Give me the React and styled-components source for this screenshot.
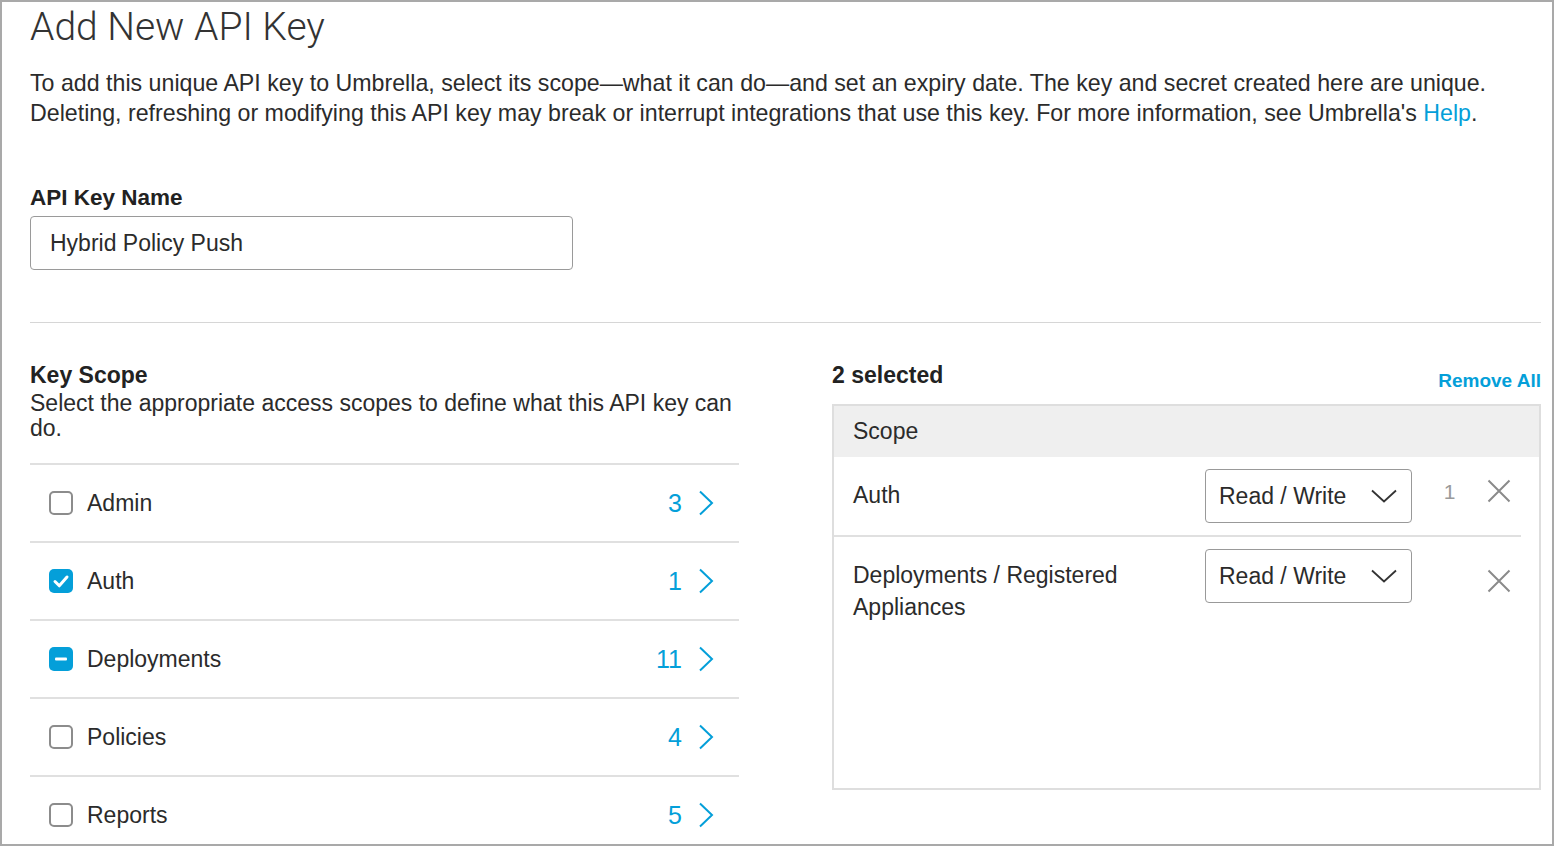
import React from "react"
import styled, { createGlobalStyle } from "styled-components"

const GlobalStyle = createGlobalStyle`
  html, body { margin: 0; padding: 0; background: #fff; }
  body { font-family: "Liberation Sans", Arial, sans-serif; color: #333; }
  * { box-sizing: border-box; }
`

const blue = "#049fd9"

const Frame = styled.div`
width: 1554px;
height: 846px;
border: 2px solid #a9a9a9;
padding: 3px 11px 0 28px;
overflow: hidden;
background: #fff;
`

const Title = styled.h1`
margin: 0;
font-family: Roboto, "Liberation Sans", sans-serif;
font-weight: 300;
font-size: 39px;
line-height: 44px;
color: #333;
`

const Intro = styled.p`
margin: 19px 0 0;
font-size: 23.2px;
line-height: 30px;
color: #2b2b2b;
white-space: nowrap;
`

const Link = styled.a`
color: ${blue};
text-decoration: none;
`

const FieldLabel = styled.div`
margin-top: 57px;
font-weight: 700;
font-size: 22.5px;
line-height: 26px;
color: #222;
`

const TextInput = styled.input`
display: block;
margin-top: 5px;
width: 543px;
height: 54px;
border: 1.5px solid #9a9a9a;
border-radius: 4px;
padding: 0 19px;
font-family: inherit;
font-size: 23px;
color: #2b2b2b;
outline: none;
`

const Divider = styled.hr`
margin: 52px 0 0;
border: none;
height: 1px;
background: #d6d6d6;
`

const Columns = styled.div`
display: grid;
grid-template-columns: 709px 709px;
column-gap: 93px;
margin-top: 39px;
`

const Column = styled.div`
display: flex;
flex-direction: column;
`

const SectionTitle = styled.div`
font-weight: 700;
font-size: 23px;
line-height: 26px;
color: #222;
`

const Desc = styled.div`
margin-top: 3px;
font-size: 23px;
line-height: 25px;
color: #2b2b2b;
`

const ScopeList = styled.div`
margin-top: 22px;
`

const ScopeRow = styled.div`
display: flex;
align-items: center;
gap: 14px;
height: 78px;
padding: 0 25px 0 19px;
border-top: 2px solid #e0e0e0;
`

const Box = styled.span`
flex: none;
width: 24px;
height: 24px;
border-radius: 5px;
border: ${({ $on }) => ($on ? "none" : "2.5px solid #8c8c8c")};
background: ${({ $on }) => ($on ? blue : "#fff")};
display: flex;
align-items: center;
justify-content: center;
`

const ScopeName = styled.span`
flex: 1;
font-size: 23px;
color: #2b2b2b;
`

const Count = styled.span`
font-size: 25px;
color: ${blue};
margin-right: 2px;
`

const SelHeader = styled.div`
display: flex;
justify-content: space-between;
align-items: flex-end;
`

const RemoveAll = styled.a`
font-weight: 700;
font-size: 19px;
line-height: 22px;
color: ${blue};
margin-bottom: -4px;
`

const Table = styled.div`
margin-top: 16px;
height: 386px;
border: 2px solid #dedede;
`

const TableHead = styled.div`
height: 51px;
background: #efefef;
padding-left: 19px;
display: flex;
align-items: center;
font-size: 23px;
color: #2b2b2b;
`

const Rows = styled.div`
margin-right: 18px;
`

const Row = styled.div`
display: grid;
grid-template-columns: 1fr 207px 75px 24px;
align-items: start;
padding: 12px 10px 12px 19px;
border-bottom: ${({ $divided }) => ($divided ? "2px solid #e0e0e0" : "none")};
`

const RowName = styled.div`
margin-top: 10px;
font-size: 23px;
line-height: 32px;
color: #2b2b2b;
`

const Select = styled.div`
height: 54px;
border: 1.5px solid #999;
border-radius: 4px;
padding: 0 14px 0 13px;
display: flex;
align-items: center;
justify-content: space-between;
font-size: 23px;
color: #2b2b2b;
`

const RowCount = styled.div`
margin-top: 7px;
text-align: center;
font-size: 21px;
line-height: 32px;
color: #9a9a9a;
`

const Remove = styled.svg`
margin-top: ${({ $top }) => $top}px;
`

const Chevron = () => (
  <svg width="16" height="26" viewBox="0 0 16 26">
    <path d="M2 1.5 L14 13 L2 24.5" fill="none" stroke={blue} strokeWidth="2" />
  </svg>
)

const Check = ({ state }) => (
  <Box $on={state !== "off"}>
    {state === "on" && (
      <svg width="24" height="24" viewBox="0 0 24 24">
        <path d="M6 12.5 L10.3 16.8 L18 8" fill="none" stroke="#fff" strokeWidth="3" strokeLinecap="round" strokeLinejoin="round" />
      </svg>
    )}
    {state === "mixed" && (
      <svg width="24" height="24" viewBox="0 0 24 24">
        <rect x="6" y="10.5" width="12" height="3" rx="1" fill="#fff" />
      </svg>
    )}
  </Box>
)

const scopes = [
  { name: "Admin", count: 3, state: "off" },
  { name: "Auth", count: 1, state: "on" },
  { name: "Deployments", count: 11, state: "mixed" },
  { name: "Policies", count: 4, state: "off" },
  { name: "Reports", count: 5, state: "off" },
]

const selected = [
  { name: "Auth", count: "1", xTop: 10 },
  { name: <>Deployments / Registered<br />Appliances</>, count: "", xTop: 20 },
]

const App = () => (
  <>
    <GlobalStyle />
    <Frame>
      <Title>Add New API Key</Title>
      <Intro>
        To add this unique API key to Umbrella, select its scope—what it can do—and set an expiry date. The key and secret created here are unique.<br />
        Deleting, refreshing or modifying this API key may break or interrupt integrations that use this key. For more information, see Umbrella's <Link>Help</Link>.
      </Intro>
      <FieldLabel>API Key Name</FieldLabel>
      <TextInput defaultValue="Hybrid Policy Push" readOnly />
      <Divider />
      <Columns>
        <Column>
          <SectionTitle>Key Scope</SectionTitle>
          <Desc>Select the appropriate access scopes to define what this API key can do.</Desc>
          <ScopeList>
            {scopes.map(s => (
              <ScopeRow key={s.name}>
                <Check state={s.state} />
                <ScopeName>{s.name}</ScopeName>
                <Count>{s.count}</Count>
                <Chevron />
              </ScopeRow>
            ))}
          </ScopeList>
        </Column>
        <Column>
          <SelHeader>
            <SectionTitle>2 selected</SectionTitle>
            <RemoveAll>Remove All</RemoveAll>
          </SelHeader>
          <Table>
            <TableHead>Scope</TableHead>
            <Rows>
              {selected.map((r, i) => (
                <Row key={i} $divided={i < selected.length - 1}>
                  <RowName>{r.name}</RowName>
                  <Select>
                    Read / Write
                    <svg width="26" height="14" viewBox="0 0 26 14">
                      <path d="M1 1.5 L13 12.5 L25 1.5" fill="none" stroke="#333" strokeWidth="1.8" />
                    </svg>
                  </Select>
                  <RowCount>{r.count}</RowCount>
                  <Remove $top={r.xTop} width="24" height="24" viewBox="0 0 24 24">
                    <path d="M1.5 1.5 L22.5 22.5 M22.5 1.5 L1.5 22.5" fill="none" stroke="#8a8a8a" strokeWidth="2" />
                  </Remove>
                </Row>
              ))}
            </Rows>
          </Table>
        </Column>
      </Columns>
    </Frame>
  </>
)

export default App
